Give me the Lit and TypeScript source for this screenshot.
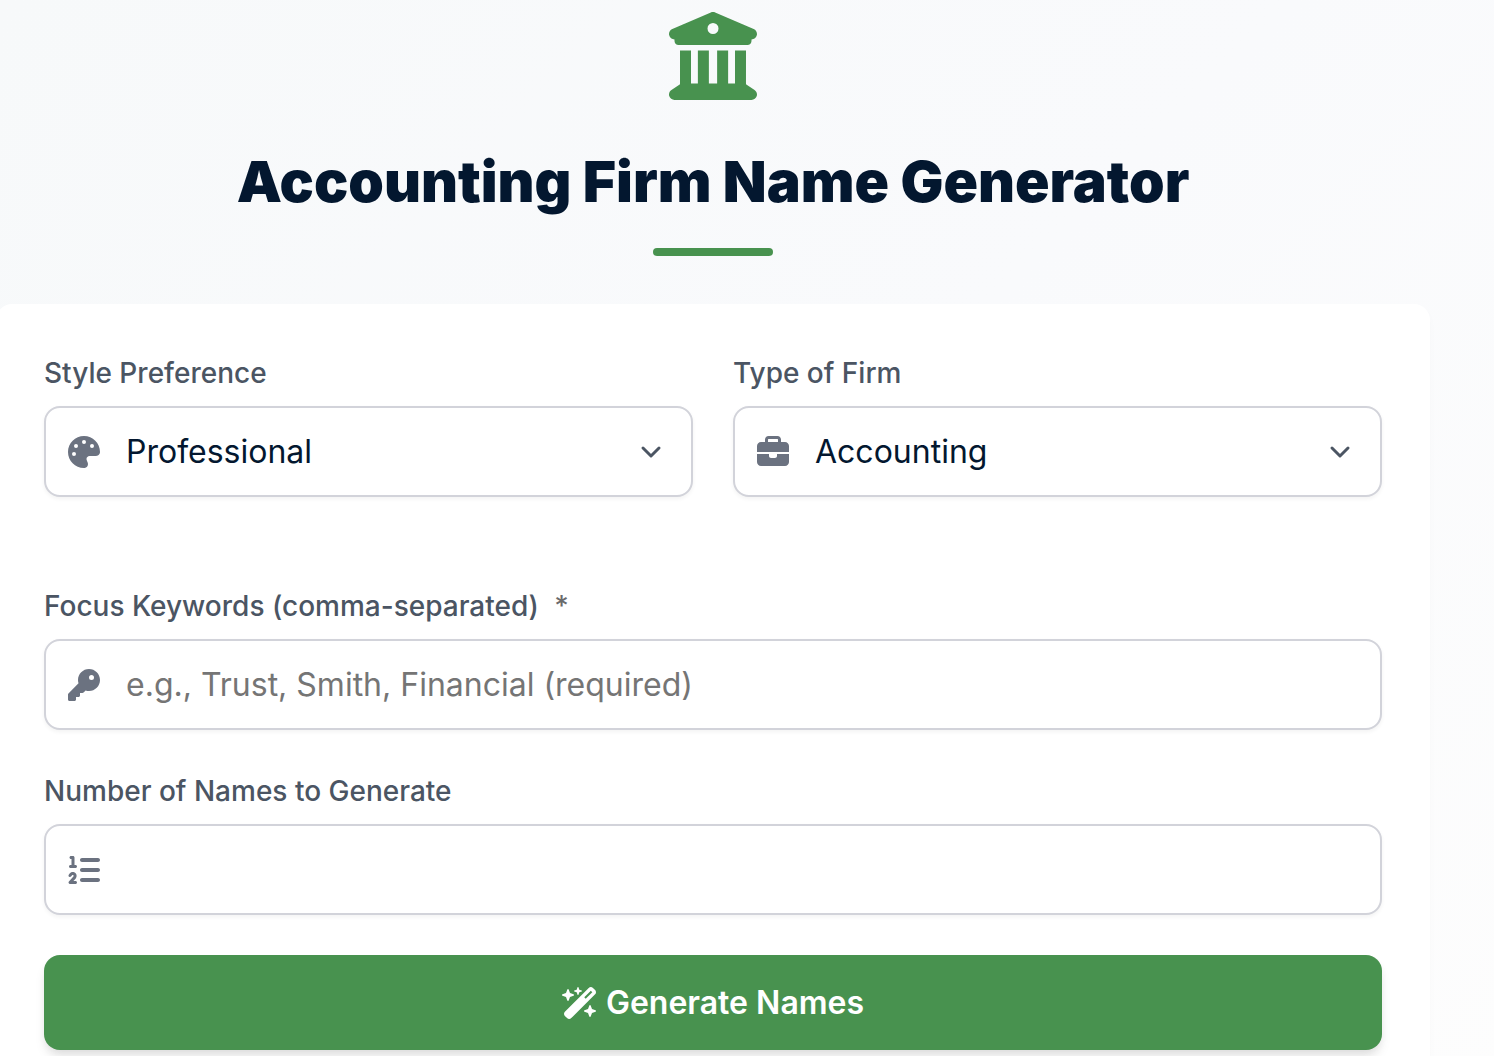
import { LitElement, html, css, svg } from "lit";
import { customElement, property, state } from "lit/decorators.js";

type IconName = "bank" | "palette" | "briefcase" | "key" | "list" | "wand" | "chevron";

const GLYPHS: Record<IconName, { box: string; art: unknown }> = {
  bank: {
    box: "0 0 512 512",
    art: svg`<path d="M243.4 2.6l-224 96c-14 6-21.8 21-18.7 35.8S16.8 160 32 160l0 8c0 13.3 10.7 24 24 24l400 0c13.3 0 24-10.7 24-24l0-8c15.2 0 28.3-10.7 31.3-25.6s-4.8-29.9-18.7-35.8l-224-96c-8-3.4-17.2-3.4-25.2 0zM128 224l-64 0 0 196.3c-.6 .3-1.2 .7-1.8 1.1l-48 32c-11.7 7.8-17 22.4-12.9 35.9S17.9 512 32 512l448 0c14.1 0 26.5-9.2 30.6-22.7s-1.1-28.1-12.9-35.9l-48-32c-.6-.4-1.2-.7-1.8-1.1L448 224l-64 0 0 192-40 0 0-192-64 0 0 192-48 0 0-192-64 0 0 192-40 0 0-192zM256 64a32 32 0 1 1 0 64 32 32 0 1 1 0-64z"/>`,
  },
  palette: {
    box: "0 0 512 512",
    art: svg`<path d="M512 256c0 .9 0 1.8 0 2.7c-.4 36.5-33.6 61.3-70.1 61.3L344 320c-26.5 0-48 21.5-48 48c0 3.4 .4 6.7 1 9.9c2.1 10.2 6.5 20 10.8 29.9c6.1 13.8 12.1 27.5 12.1 42c0 31.8-21.6 60.7-53.4 62c-3.5 .1-7 .2-10.6 .2C114.6 512 0 397.4 0 256S114.6 0 256 0S512 114.6 512 256zM128 288a32 32 0 1 0 -64 0 32 32 0 1 0 64 0zm0-96a32 32 0 1 0 0-64 32 32 0 1 0 0 64zM288 96a32 32 0 1 0 -64 0 32 32 0 1 0 64 0zm96 96a32 32 0 1 0 0-64 32 32 0 1 0 0 64z"/>`,
  },
  briefcase: {
    box: "0 0 512 512",
    art: svg`<path d="M184 48l144 0c4.400 0 8 3.600 8 8l0 40L176 96l0-40c0-4.400 3.600-8 8-8zm-56 8l0 40L64 96C28.700 96 0 124.700 0 160l0 96 192 0 128 0 192 0 0-96c0-35.300-28.700-64-64-64l-64 0 0-40c0-30.900-25.100-56-56-56L184 0c-30.900 0-56 25.100-56 56zM512 288l-192 0 0 32c0 17.700-14.300 32-32 32l-64 0c-17.700 0-32-14.300-32-32l0-32L0 288 0 416c0 35.300 28.700 64 64 64l384 0c35.300 0 64-28.700 64-64l0-128z"/>`,
  },
  key: {
    box: "0 0 512 512",
    art: svg`<path d="M336 352c97.200 0 176-78.800 176-176S433.200 0 336 0S160 78.800 160 176c0 18.700 2.900 36.800 8.300 53.700L7 391c-4.500 4.500-7 10.600-7 17l0 80c0 13.300 10.700 24 24 24l80 0c13.300 0 24-10.700 24-24l0-40 40 0c13.300 0 24-10.700 24-24l0-40 40 0c6.400 0 12.500-2.500 17-7l33.300-33.300c16.900 5.400 35 8.300 53.700 8.300zM376 96a40 40 0 1 1 0 80 40 40 0 1 1 0-80z"/>`,
  },
  list: {
    box: "0 0 512 512",
    art: svg`<path d="M24 56c0-13.300 10.700-24 24-24l32 0c13.300 0 24 10.700 24 24l0 120 16 0c13.300 0 24 10.700 24 24s-10.700 24-24 24l-80 0c-13.300 0-24-10.700-24-24s10.700-24 24-24l16 0 0-96-8 0C34.700 80 24 69.300 24 56zM86.700 341.200c-6.500-7.400-18.300-6.900-24 1.200L51.500 357.900c-7.700 10.800-22.700 13.300-33.500 5.600s-13.300-22.700-5.600-33.500l11.100-15.600c23.700-33.200 72.300-35.600 99.200-4.900c21.300 24.400 20.800 60.900-1.100 84.700L86.800 432l33.200 0c13.300 0 24 10.700 24 24s-10.700 24-24 24l-88 0c-9.500 0-18.200-5.600-22-14.400s-2.100-18.900 4.300-25.900l72-78c5.300-5.800 5.400-14.600 .3-20.500zM224 64l256 0c17.700 0 32 14.300 32 32s-14.300 32-32 32l-256 0c-17.700 0-32-14.300-32-32s14.300-32 32-32zm0 160l256 0c17.700 0 32 14.300 32 32s-14.300 32-32 32l-256 0c-17.700 0-32-14.300-32-32s14.300-32 32-32zm0 160l256 0c17.700 0 32 14.300 32 32s-14.300 32-32 32l-256 0c-17.700 0-32-14.300-32-32s14.300-32 32-32z"/>`,
  },
  wand: {
    box: "0 0 576 512",
    art: svg`<path d="M234.7 42.7L197 56.800c-3 1.100-5 4-5 7.200s2 6.100 5 7.200l37.700 14.100L248.800 123c1.100 3 4 5 7.200 5s6.100-2 7.200-5l14.100-37.700L315 71.200c3-1.100 5-4 5-7.200s-2-6.100-5-7.200L277.300 42.700 263.200 5c-1.100-3-4-5-7.200-5s-6.100 2-7.200 5L234.700 42.700zM46.100 395.400c-18.700 18.700-18.700 49.100 0 67.900l34.600 34.600c18.700 18.700 49.100 18.700 67.900 0L529.900 116.500c18.700-18.700 18.700-49.100 0-67.900L495.300 14.100c-18.700-18.700-49.100-18.700-67.900 0L46.100 395.400zM484.600 82.600l-105 105-23.300-23.300 105-105 23.300 23.300zM7.500 117.200C3 118.900 0 123.200 0 128s3 9.100 7.500 10.800L64 160l21.200 56.500c1.700 4.500 6 7.500 10.800 7.500s9.100-3 10.800-7.500L128 160l56.500-21.200c4.500-1.700 7.500-6 7.500-10.800s-3-9.100-7.500-10.800L128 96 106.800 39.500C105.100 35 100.800 32 96 32s-9.100 3-10.800 7.500L64 96 7.500 117.200zm352 256c-4.500 1.700-7.500 6-7.500 10.800s3 9.100 7.500 10.800L416 416l21.200 56.500c1.700 4.500 6 7.500 10.800 7.500s9.100-3 10.800-7.500L480 416l56.500-21.200c4.500-1.700 7.500-6 7.500-10.800s-3-9.100-7.500-10.800L480 352l-21.200-56.500c-1.700-4.500-6-7.500-10.800-7.500s-9.100 3-10.800 7.500L416 352l-56.500 21.200z"/>`,
  },
  chevron: {
    box: "0 0 20 20",
    art: svg`<path d="M6 8l4 4 4-4" fill="none" stroke="currentColor" stroke-width="1.5" stroke-linecap="round" stroke-linejoin="round"/>`,
  },
};

@customElement("app-icon")
export class AppIcon extends LitElement {
  @property() name: IconName = "bank";

  static styles = css`
    :host {
      display: block;
      flex: none;
    }
    .glyph {
      display: block;
      width: 100%;
      height: 100%;
      fill: currentColor;
    }
  `;

  render() {
    const glyph = GLYPHS[this.name];
    return html`<svg class="glyph" viewBox=${glyph.box} aria-hidden="true">${glyph.art}</svg>`;
  }
}

@customElement("app-root")
export class AppRoot extends LitElement {
  @state() private keywords = "";

  static styles = css`
    :host {
      display: block;
      box-sizing: border-box;
      min-height: 100vh;
      padding: 12px 64px 0 0;
      font-family: Inter, "Liberation Sans", sans-serif;
      color: #03172f;
      background: linear-gradient(135deg, #f7f9fa 0%, #f9fafc 50%, #fdfdfd 100%);
    }
    .page {
      margin-left: -4px;
    }
    .header {
      display: flex;
      flex-direction: column;
      align-items: center;
    }
    .logo {
      width: 88px;
      height: 88px;
      color: #48924f;
    }
    .title {
      margin: 40px 0 24px;
      font-size: 57px;
      line-height: 84px;
      font-weight: 900;
      text-align: center;
    }
    .rule {
      width: 120px;
      height: 8px;
      border-radius: 4px;
      background: #48924f;
    }
    .card {
      display: flex;
      flex-direction: column;
      gap: 40px;
      margin-top: 48px;
      padding: 48px;
      border-radius: 16px;
      background: #ffffff;
      box-shadow: 0 4px 8px rgba(0, 0, 0, 0.02);
    }
    .pair {
      display: grid;
      grid-template-columns: 1fr 1fr;
      gap: 40px;
      margin-bottom: 48px;
    }
    .field {
      display: flex;
      flex-direction: column;
      gap: 12px;
      min-width: 0;
    }
    .label {
      font-size: 28px;
      line-height: 42px;
      font-weight: 500;
      color: #4b5563;
    }
    .mark {
      margin-left: 8px;
      color: #6b6b6b;
    }
    .box {
      display: grid;
      align-items: center;
    }
    .box > * {
      grid-area: 1 / 1;
    }
    .lead,
    .chevron {
      z-index: 1;
      pointer-events: none;
    }
    .lead {
      width: 32px;
      height: 32px;
      margin-left: 24px;
      color: #6b7280;
    }
    .chevron {
      justify-self: end;
      width: 40px;
      height: 40px;
      margin-right: 22px;
      color: #4b5563;
    }
    .control {
      box-sizing: border-box;
      width: 100%;
      height: 91px;
      margin: 0;
      padding: 0 80px;
      border: 2px solid #d2d3da;
      border-radius: 16px;
      outline: none;
      appearance: none;
      font: 400 32px/48px Inter, "Liberation Sans", sans-serif;
      color: #03172f;
      background: #ffffff;
      box-shadow: 0 2px 4px rgba(0, 0, 0, 0.05);
    }
    .control:focus-visible {
      border-color: #48924f;
    }
    .control::placeholder {
      color: #757575;
      opacity: 1;
    }
    .control::-webkit-inner-spin-button {
      appearance: none;
    }
    .submit {
      display: flex;
      align-items: center;
      justify-content: center;
      gap: 8px;
      height: 95px;
      padding: 0 32px;
      border: 0;
      border-radius: 16px;
      font: 600 32px/48px Inter, "Liberation Sans", sans-serif;
      color: #ffffff;
      background: #48924f;
      box-shadow:
        0 8px 12px -2px rgba(0, 0, 0, 0.1),
        0 4px 8px -2px rgba(0, 0, 0, 0.06);
      cursor: pointer;
    }
    .wand {
      width: 36px;
      height: 32px;
    }
  `;

  private onKeywords(event: Event) {
    this.keywords = (event.target as HTMLInputElement).value;
  }

  render() {
    return html`
      <main class="page">
        <header class="header">
          <app-icon class="logo" name="bank"></app-icon>
          <h1 class="title">Accounting Firm Name Generator</h1>
          <div class="rule"></div>
        </header>
        <form class="card" @submit=${(e: Event) => e.preventDefault()}>
          <div class="pair">
            <div class="field">
              <label class="label" for="style">Style Preference</label>
              <div class="box">
                <select class="control" id="style">
                  <option>Professional</option>
                </select>
                <app-icon class="lead" name="palette"></app-icon>
                <app-icon class="chevron" name="chevron"></app-icon>
              </div>
            </div>
            <div class="field">
              <label class="label" for="firm">Type of Firm</label>
              <div class="box">
                <select class="control" id="firm">
                  <option>Accounting</option>
                </select>
                <app-icon class="lead" name="briefcase"></app-icon>
                <app-icon class="chevron" name="chevron"></app-icon>
              </div>
            </div>
          </div>
          <div class="field">
            <label class="label" for="keywords">Focus Keywords (comma-separated) <span class="mark">*</span></label>
            <div class="box">
              <input
                class="control"
                id="keywords"
                type="text"
                required
                placeholder="e.g., Trust, Smith, Financial (required)"
                .value=${this.keywords}
                @input=${this.onKeywords}
              />
              <app-icon class="lead" name="key"></app-icon>
            </div>
          </div>
          <div class="field">
            <label class="label" for="count">Number of Names to Generate</label>
            <div class="box">
              <input class="control" id="count" type="number" min="1" />
              <app-icon class="lead" name="list"></app-icon>
            </div>
          </div>
          <button class="submit" type="submit">
            <app-icon class="wand" name="wand"></app-icon>
            Generate Names
          </button>
        </form>
      </main>
    `;
  }
}
